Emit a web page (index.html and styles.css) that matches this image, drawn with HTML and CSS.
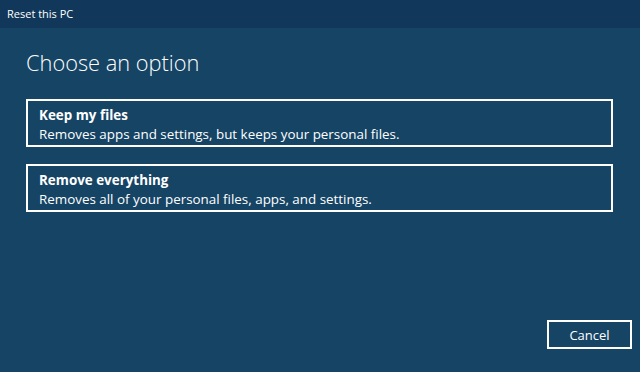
FILE: index.html
```html
<!DOCTYPE html>
<html lang="en">
<head>
<meta charset="utf-8">
<title>Reset this PC</title>
<link rel="stylesheet" href="styles.css">
</head>
<body>
<div class="window">
  <div class="titlebar">Reset this PC</div>
  <div class="content">
    <h1 class="heading">Choose an option</h1>
    <div class="options">
      <div class="option">
        <div class="option-title">Keep my files</div>
        <div class="option-desc">Removes apps and settings, but keeps your personal files.</div>
      </div>
      <div class="option">
        <div class="option-title">Remove everything</div>
        <div class="option-desc">Removes all of your personal files, apps, and settings.</div>
      </div>
    </div>
  </div>
  <div class="footer">
    <button class="cancel">Cancel</button>
  </div>
</div>
</body>
</html>
```
FILE: styles.css
```css
html, body {
  margin: 0;
  padding: 0;
}
body {
  background: #164465;
  font-family: "Open Sans", "Noto Sans", sans-serif;
  color: #ffffff;
}
.window {
  width: 640px;
  height: 372px;
  display: flex;
  flex-direction: column;
  background: #164465;
}
.titlebar {
  height: 28px;
  line-height: 28px;
  background: #11385a;
  padding-left: 7px;
  font-size: 11px;
  color: #ffffff;
}
.content {
  padding: 20px 27px 0 26px;
}
.heading {
  margin: 0;
  font-size: 21.8px;
  font-weight: 300;
  line-height: 30px;
  color: #ffffff;
}
.options {
  margin-top: 21px;
  display: flex;
  flex-direction: column;
  gap: 17px;
}
.option {
  border: 2px solid #ffffff;
  padding: 5px 11px 2px 11px;
  height: 48px;
  box-sizing: border-box;
}
.option-title {
  font-size: 13.4px;
  font-weight: 700;
  line-height: 19px;
}
.option-desc {
  font-size: 13.4px;
  line-height: 19px;
}
.footer {
  margin-top: auto;
  display: flex;
  justify-content: flex-end;
  padding: 0 8px 23px 0;
}
.cancel {
  width: 85px;
  height: 29px;
  border: 2px solid #ffffff;
  background: transparent;
  color: #ffffff;
  font-family: "Open Sans", "Noto Sans", sans-serif;
  font-size: 13px;
  padding: 0;
}
```
